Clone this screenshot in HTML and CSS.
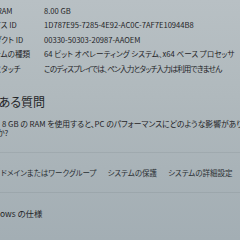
FILE: index.html
```html
<!DOCTYPE html>
<html lang="ja">
<head>
<meta charset="utf-8">
<link rel="stylesheet" href="styles.css">
</head>
<body>
<div class="page">
  <section class="specs">
    <div class="row"><span class="label">実装 RAM</span><span class="value">8.00 GB</span></div>
    <div class="row"><span class="label">デバイス ID</span><span class="value">1D787E95-7285-4E92-AC0C-7AF7E10944B8</span></div>
    <div class="row"><span class="label">プロダクト ID</span><span class="value">00330-50303-20987-AAOEM</span></div>
    <div class="row"><span class="label">システムの種類</span><span class="value">64 ビット オペレーティング システム、x64 ベース プロセッサ</span></div>
    <div class="row"><span class="label">ペンとタッチ</span><span class="value value-tight">このディスプレイでは、ペン入力とタッチ入力は利用できません</span></div>
  </section>

  <section class="faq">
    <h2 class="faq-title">よくある質問</h2>
    <p class="question"><span class="q-line">8 GB の RAM を使用すると、PC のパフォーマンスにどのような影響がありま</span><span class="q-line q-wrap">すか?</span></p>
  </section>

  <nav class="links">
    <span class="link">ドメインまたはワークグループ</span>
    <span class="link">システムの保護</span>
    <span class="link">システムの詳細設定</span>
  </nav>

  <section class="winspec">
    <span class="winspec-title">Windows の仕様</span>
  </section>
</div>
</body>
</html>
```

FILE: styles.css
```css
html, body {
  margin: 0;
  padding: 0;
}

body {
  width: 240px;
  height: 240px;
  overflow: hidden;
  background: linear-gradient(180deg, #b8c0c4 0%, #b0b9bd 40%, #a9b3b8 70%, #a3aeb4 100%);
  color: #1f2427;
  font-family: "Noto Sans CJK JP", "Noto Sans", sans-serif;
  font-feature-settings: "palt";
}

.page {
  margin-left: -20px;
  width: 300px;
}

.specs {
  padding-top: 3px;
  font-size: 7.6px;
}

.row {
  display: grid;
  grid-template-columns: 64px auto;
  height: 14.5px;
  align-items: center;
  white-space: nowrap;
}

.value-tight {
  letter-spacing: -0.8px;
}

.faq {
  margin-top: 18px;
}

.faq-title {
  margin: 0;
  font-size: 12px;
  font-weight: 400;
  line-height: 16px;
  height: 16px;
}

.question {
  margin: 9px 0 0 22px;
  font-size: 7.8px;
  line-height: 9.5px;
  white-space: nowrap;
}

.q-line {
  display: block;
}

.q-wrap {
  margin-left: -12px;
}

.links {
  margin-top: 14px;
  border-top: 1px solid rgba(80, 90, 95, 0.12);
  border-bottom: 1px solid rgba(80, 90, 95, 0.12);
  height: 39px;
  display: flex;
  align-items: center;
  gap: 11px;
  padding-left: 21px;
  font-size: 7.5px;
  color: #2a3034;
  white-space: nowrap;
}

.winspec {
  height: 40px;
  display: flex;
  align-items: center;
  font-size: 8.4px;
}
```
